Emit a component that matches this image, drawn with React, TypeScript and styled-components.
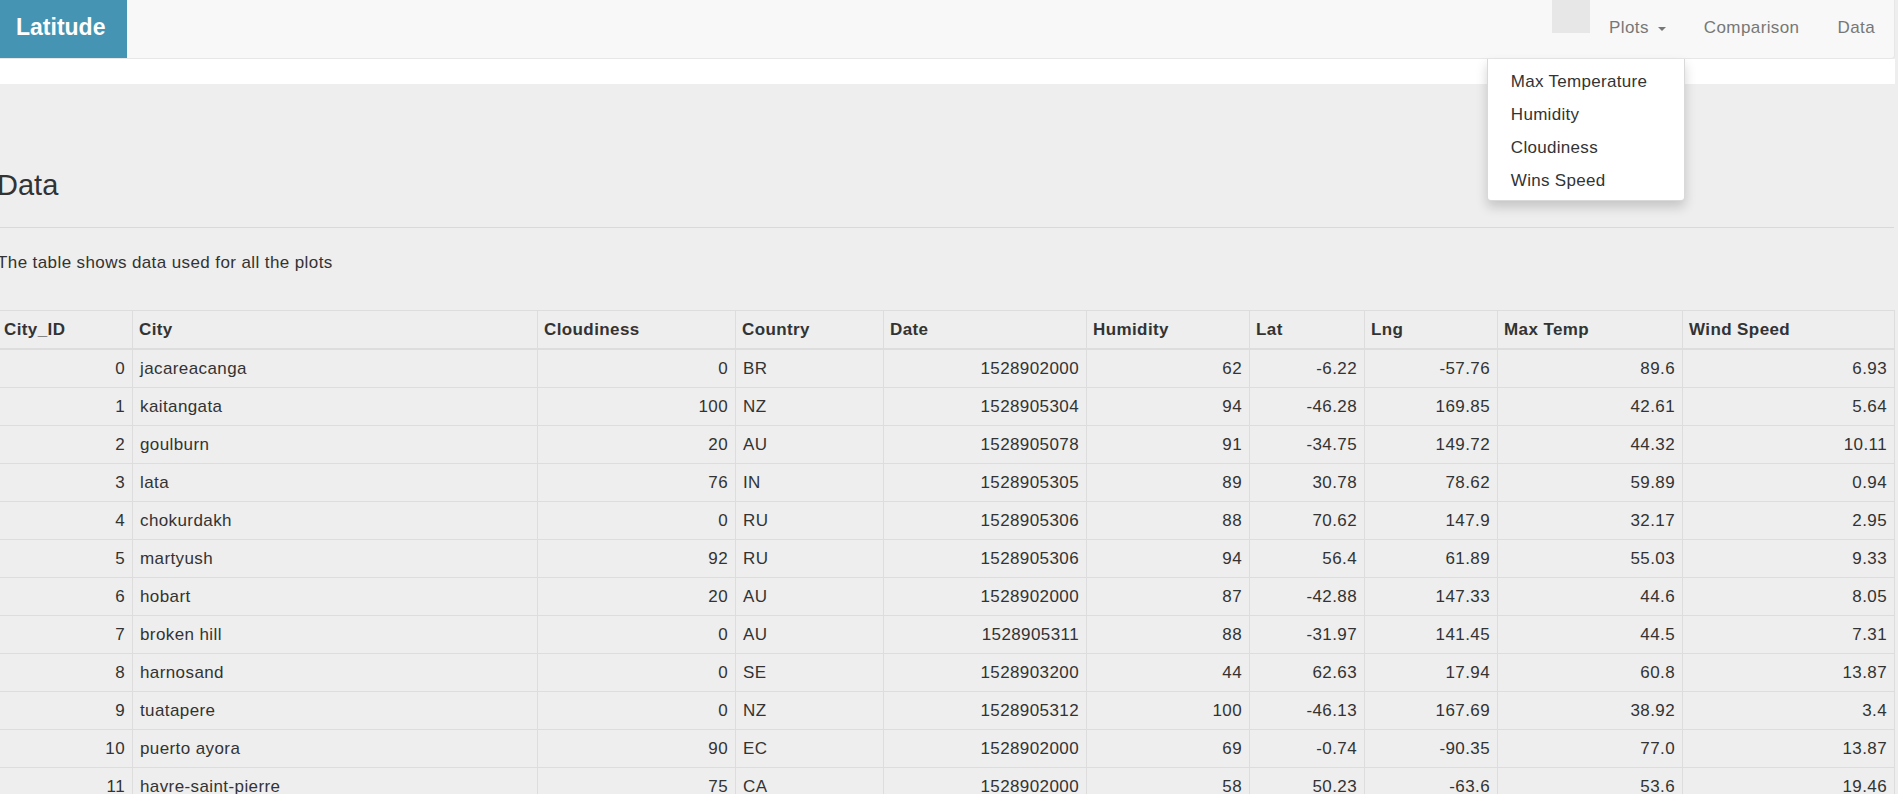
import styled, { createGlobalStyle } from "styled-components";

const GlobalStyle = createGlobalStyle`
  html, body {
    margin: 0;
    padding: 0;
    background-color: #eeeeee;
    overflow: hidden;
  }
  body {
    font-family: "Liberation Sans", Arial, sans-serif;
    color: #333;
  }
`;

export const Page = styled.div`
  width: 1895px;
`;

export const Navbar = styled.nav`
  position: relative;
  z-index: 10;
  display: flex;
  justify-content: space-between;
  height: 58px;
  background-color: #f8f8f8;
  border-bottom: 1px solid #e7e7e7;
  border-right: 1px solid #e7e7e7;
  border-bottom-right-radius: 4px;
`;

export const Brand = styled.a`
  box-sizing: border-box;
  width: 127px;
  height: 58px;
  padding: 0 0 4px 16px;
  line-height: 54px;
  background-color: #4594b4;
  color: #fff;
  font-size: 23px;
  font-weight: bold;
  text-decoration: none;
`;

export const NavList = styled.ul`
  display: flex;
  margin: 0;
  padding: 0;
  list-style: none;
`;

export const NavBlank = styled.li`
  width: 38px;
  height: 33px;
  background-color: #e7e7e7;
`;

export const NavItem = styled.li`
  position: relative;
`;

export const NavLink = styled.a`
  display: flex;
  align-items: center;
  box-sizing: border-box;
  height: 58px;
  padding: 0 19px 2px 19px;
  color: #777;
  font-size: 17px;
  letter-spacing: 0.4px;
  line-height: 24px;
  text-decoration: none;
`;

export const Caret = styled.span`
  display: inline-block;
  margin-left: 9px;
  margin-top: 2px;
  border-top: 4px solid #777;
  border-left: 4px solid transparent;
  border-right: 4px solid transparent;
`;

export const Menu = styled.ul`
  position: absolute;
  top: 100%;
  right: 0;
  box-sizing: border-box;
  width: 198px;
  margin: 1px 0 0;
  padding: 6px 0 3px;
  list-style: none;
  background-color: #fff;
  border: 1px solid rgba(0, 0, 0, 0.15);
  border-top: none;
  border-radius: 0 0 4px 4px;
  box-shadow: 0 6px 12px rgba(0, 0, 0, 0.175);
`;

export const MenuItem = styled.li`
  padding: 4px 10px 4px 23px;
  color: #333;
  font-size: 17px;
  letter-spacing: 0.3px;
  line-height: 25px;
  white-space: nowrap;
`;

export const Strip = styled.div`
  height: 25px;
  background-color: #fff;
`;

export const Content = styled.main`
  width: 1897px;
  margin-left: -3px;
  padding-top: 85px;
`;

export const Title = styled.h1`
  margin: 0;
  font-size: 29px;
  font-weight: 500;
  line-height: 32px;
  color: #333;
`;

export const Rule = styled.hr`
  margin: 26px 0 0 3px;
  border: 0;
  border-top: 1px solid #d9d9d9;
`;

export const Lead = styled.p`
  margin: 23px 0 35px;
  font-size: 17px;
  letter-spacing: 0.4px;
  line-height: 24px;
`;

export const Table = styled.table`
  width: 1897px;
  table-layout: fixed;
  border-collapse: collapse;
  border-spacing: 0;
  font-size: 17px;
  letter-spacing: 0.4px;
  line-height: 23px;
`;

export const HeadCell = styled.th`
  padding: 7px 7px 7px 6px;
  text-align: left;
  font-weight: bold;
  border: 1px solid #ddd;
  border-bottom: 2px solid #ddd;
  white-space: nowrap;
`;

export const Cell = styled.td<{ $align?: "left" | "right" }>`
  padding: 7px;
  text-align: ${(p) => p.$align ?? "right"};
  border: 1px solid #ddd;
  white-space: nowrap;
`;

const columns: { label: string; width: number; align: "left" | "right" }[] = [
  { label: "City_ID", width: 135, align: "right" },
  { label: "City", width: 405, align: "left" },
  { label: "Cloudiness", width: 198, align: "right" },
  { label: "Country", width: 148, align: "left" },
  { label: "Date", width: 203, align: "right" },
  { label: "Humidity", width: 163, align: "right" },
  { label: "Lat", width: 115, align: "right" },
  { label: "Lng", width: 133, align: "right" },
  { label: "Max Temp", width: 185, align: "right" },
  { label: "Wind Speed", width: 212, align: "right" },
];

const rows: (string | number)[][] = [
  [0, "jacareacanga", 0, "BR", 1528902000, 62, "-6.22", "-57.76", "89.6", "6.93"],
  [1, "kaitangata", 100, "NZ", 1528905304, 94, "-46.28", "169.85", "42.61", "5.64"],
  [2, "goulburn", 20, "AU", 1528905078, 91, "-34.75", "149.72", "44.32", "10.11"],
  [3, "lata", 76, "IN", 1528905305, 89, "30.78", "78.62", "59.89", "0.94"],
  [4, "chokurdakh", 0, "RU", 1528905306, 88, "70.62", "147.9", "32.17", "2.95"],
  [5, "martyush", 92, "RU", 1528905306, 94, "56.4", "61.89", "55.03", "9.33"],
  [6, "hobart", 20, "AU", 1528902000, 87, "-42.88", "147.33", "44.6", "8.05"],
  [7, "broken hill", 0, "AU", 1528905311, 88, "-31.97", "141.45", "44.5", "7.31"],
  [8, "harnosand", 0, "SE", 1528903200, 44, "62.63", "17.94", "60.8", "13.87"],
  [9, "tuatapere", 0, "NZ", 1528905312, 100, "-46.13", "167.69", "38.92", "3.4"],
  [10, "puerto ayora", 90, "EC", 1528902000, 69, "-0.74", "-90.35", "77.0", "13.87"],
  [11, "havre-saint-pierre", 75, "CA", 1528902000, 58, "50.23", "-63.6", "53.6", "19.46"],
];

const plots = ["Max Temperature", "Humidity", "Cloudiness", "Wins Speed"];

export default function App() {
  return (
    <Page>
      <GlobalStyle />
      <Navbar>
        <Brand href="#">Latitude</Brand>
        <NavList>
          <NavBlank />
          <NavItem>
            <NavLink href="#">
              Plots <Caret />
            </NavLink>
            <Menu>
              {plots.map((p) => (
                <MenuItem key={p}>{p}</MenuItem>
              ))}
            </Menu>
          </NavItem>
          <NavItem>
            <NavLink href="#">Comparison</NavLink>
          </NavItem>
          <NavItem>
            <NavLink href="#">Data</NavLink>
          </NavItem>
        </NavList>
      </Navbar>
      <Strip />
      <Content>
        <Title>Data</Title>
        <Rule />
        <Lead>The table shows data used for all the plots</Lead>
        <Table>
          <colgroup>
            {columns.map((c) => (
              <col key={c.label} style={{ width: c.width }} />
            ))}
          </colgroup>
          <thead>
            <tr>
              {columns.map((c) => (
                <HeadCell key={c.label}>{c.label}</HeadCell>
              ))}
            </tr>
          </thead>
          <tbody>
            {rows.map((r) => (
              <tr key={r[0]}>
                {r.map((v, i) => (
                  <Cell key={i} $align={columns[i].align}>
                    {v}
                  </Cell>
                ))}
              </tr>
            ))}
          </tbody>
        </Table>
      </Content>
    </Page>
  );
}
